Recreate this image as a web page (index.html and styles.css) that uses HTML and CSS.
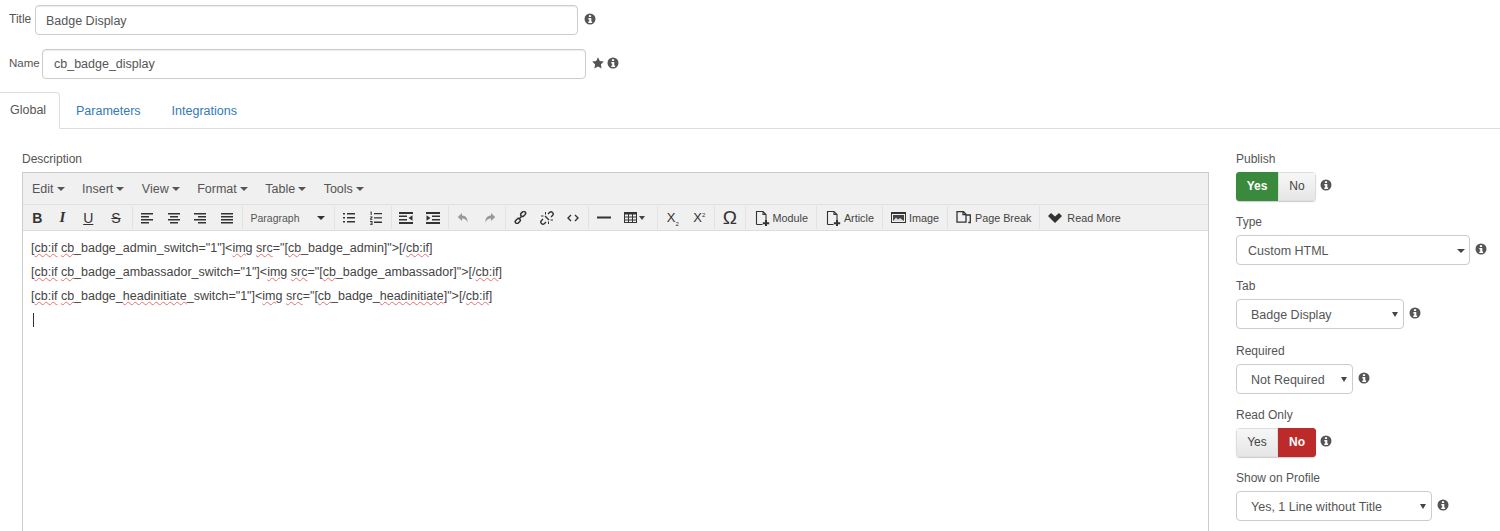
FILE: index.html
```html
<!DOCTYPE html>
<html lang="en">
<head>
<meta charset="utf-8">
<title>Badge Display</title>
<link rel="stylesheet" href="styles.css">
</head>
<body>
<svg class="defs" width="0" height="0" aria-hidden="true">
  <symbol id="info" viewBox="0 0 12 12"><path fill-rule="evenodd" d="M6 .5a5.500 5.500 0 1 0 0 11 5.500 5.500 0 0 0 0-11zM4.900 2.200h2.200v1.800H4.900zM4.300 5h3v3.600h.8V10H4.300V8.600h.9V6.400h-.9z"/></symbol>
  <symbol id="doc" viewBox="0 0 16 16"><path fill="none" stroke="#333" stroke-width="1.100" d="M2.500 14.500V1.500h6.500l3 3v6M9 1.500v3h3M2.500 14.500h6"/><path fill="#333" d="M11 10h2v2.200h2.200v2H13v2.200h-2v-2.200H8.800v-2H11z"/></symbol>
</svg>

<div class="top-row title-row">
  <label class="top-label title-label">Title</label>
  <div class="input title-input">Badge Display</div>
  <svg class="info"><use href="#info"/></svg>
</div>
<div class="top-row name-row">
  <label class="top-label name-label">Name</label>
  <div class="input name-input">cb_badge_display</div>
  <svg class="star" viewBox="0 0 12 12"><path d="M6 .3l1.800 3.700 4 .6-2.900 2.800.7 4L6 9.500l-3.600 1.900.7-4L.2 4.600l4-.6z"/></svg>
  <svg class="info"><use href="#info"/></svg>
</div>

<nav class="tabs">
  <a class="tab active">Global</a>
  <a class="tab">Parameters</a>
  <a class="tab">Integrations</a>
</nav>

<main class="main">
  <section class="left">
    <div class="field-label">Description</div>
    <div class="editor">
      <div class="menubar">
        <span class="menu">Edit<i class="caret"></i></span>
        <span class="menu">Insert<i class="caret"></i></span>
        <span class="menu">View<i class="caret"></i></span>
        <span class="menu">Format<i class="caret"></i></span>
        <span class="menu">Table<i class="caret"></i></span>
        <span class="menu">Tools<i class="caret"></i></span>
      </div>
      <div class="toolbar">
        <div class="group first">
          <span class="btn glyph bold">B</span>
          <span class="btn glyph ital">I</span>
          <span class="btn glyph under">U</span>
          <span class="btn glyph strike">S</span>
        </div>
        <div class="group">
          <span class="btn"><svg width="14" height="12" viewBox="0 0 14 12"><path d="M1 1h12v1.500H1zM1 4h8v1.500H1zM1 7h12v1.500H1zM1 10h8v1.500H1z"/></svg></span>
          <span class="btn"><svg width="14" height="12" viewBox="0 0 14 12"><path d="M1 1h12v1.500H1zM3 4h8v1.500H3zM1 7h12v1.500H1zM3 10h8v1.500H3z"/></svg></span>
          <span class="btn"><svg width="14" height="12" viewBox="0 0 14 12"><path d="M1 1h12v1.500H1zM5 4h8v1.500H5zM1 7h12v1.500H1zM5 10h8v1.500H5z"/></svg></span>
          <span class="btn"><svg width="14" height="12" viewBox="0 0 14 12"><path d="M1 1h12v1.500H1zM1 4h12v1.500H1zM1 7h12v1.500H1zM1 10h12v1.500H1z"/></svg></span>
        </div>
        <div class="group para"><span class="para-text">Paragraph</span><i class="caret"></i></div>
        <div class="group">
          <span class="btn"><svg width="14" height="12" viewBox="0 0 14 12"><path d="M1 1h2v1.500H1zM5 1h8v1.500H5zM1 5h2v1.500H1zM5 5h8v1.500H5zM1 9h2v1.500H1zM5 9h8v1.500H5z"/></svg></span>
          <span class="btn"><svg width="14" height="14" viewBox="0 0 14 14"><path d="M5 2h8v1.300H5zM5 6.300h8v1.300H5zM5 10.600h8v1.300H5zM1.500.5h1.200v3.500h-1zM1 5.500h2.500v1l-1.300 1.500h1.300v.8H1v-1l1.400-1.500H1zM1 10h2.500v4H1v-.8h1.600v-.8H1.500v-.7h1.100V11H1z"/></svg></span>
        </div>
        <div class="group">
          <span class="btn"><svg width="14" height="12" viewBox="0 0 14 12"><path d="M0 0h14v2H0zM0 3.500h8v1.500H0zM0 7h8v1.500H0zM0 10h14v2H0zM9.500 6L13.500 3.300v5.400z"/></svg></span>
          <span class="btn"><svg width="14" height="12" viewBox="0 0 14 12"><path d="M0 0h14v2H0zM6 3.500h8v1.500H6zM6 7h8v1.500H6zM0 10h14v2H0zM4.500 6L.5 3.300v5.400z"/></svg></span>
        </div>
        <div class="group">
          <span class="btn off"><svg width="12" height="12" viewBox="0 0 12 12"><path d="M5 1L.8 5 5 9V6.500c3 0 4.500 1.300 5.500 4 .3-4-1.500-7-5.500-7z"/></svg></span>
          <span class="btn off"><svg width="12" height="12" viewBox="0 0 12 12"><path d="M7 1l4.200 4L7 9V6.500c-3 0-4.500 1.300-5.500 4-.3-4 1.500-7 5.500-7z"/></svg></span>
        </div>
        <div class="group">
          <span class="btn"><svg width="13" height="13" viewBox="0 0 13 13"><g fill="none" stroke="#333" stroke-width="1.500"><rect x="6.400" y="1.200" width="5.500" height="3.600" rx="1.700" transform="rotate(-45 9 3)"/><rect x="1" y="8.200" width="5.500" height="3.600" rx="1.700" transform="rotate(-45 3.800 10)"/><path d="M4.800 8.200l3.400-3.400"/></g></svg></span>
          <span class="btn"><svg width="14" height="14" viewBox="0 0 14 14"><g fill="none" stroke="#333" stroke-width="1.400"><path d="M8 3l1.500-1.500a2 2 0 0 1 3 3L11 6M6 11l-1.500 1.500a2 2 0 0 1-3-3L3 8M5 5l4 4"/><path d="M5.500 1v2.500M1 5h2.500M8.500 13v-2.500M13 9h-2.500" stroke-width="1"/></g></svg></span>
          <span class="btn"><svg width="12" height="8" viewBox="0 0 12 8"><path fill="none" stroke="#333" stroke-width="1.400" d="M4 1L1 4l3 3M8 1l3 3-3 3"/></svg></span>
        </div>
        <div class="group">
          <span class="btn"><svg width="14" height="3" viewBox="0 0 14 3"><path d="M0 .5h14v2H0z"/></svg></span>
          <span class="btn wide"><svg width="13" height="11" viewBox="0 0 13 11"><path fill-rule="evenodd" d="M0 0h13v11H0zM1 2.500v2h3v-2zM5 2.500v2h3v-2zM9 2.500v2h3v-2zM1 5.500v2h3v-2zM5 5.500v2h3v-2zM9 5.500v2h3v-2zM1 8.500V10h3V8.500zM5 8.500V10h3V8.500zM9 8.500V10h3V8.500z"/></svg><i class="caret"></i></span>
        </div>
        <div class="group">
          <span class="btn glyph script"><span>X<sub>2</sub></span></span>
          <span class="btn glyph script"><span>X<sup>2</sup></span></span>
        </div>
        <div class="group"><span class="btn glyph omega">Ω</span></div>
        <div class="group txt"><svg class="tico" width="16" height="16"><use href="#doc"/></svg>Module</div>
        <div class="group txt"><svg class="tico" width="16" height="16"><use href="#doc"/></svg>Article</div>
        <div class="group txt"><svg class="tico" width="15" height="11" viewBox="0 0 15 11"><path fill-rule="evenodd" d="M0 0h15v11H0zM1 2v8h13V2z"/><path d="M2 3h11v6H2z" fill="#444"/><path d="M2 9l3-3.500 2 2 2-1.500 4 3z" fill="#ddd"/></svg>Image</div>
        <div class="group txt pb"><svg class="tico" width="15" height="14" viewBox="0 0 15 14"><path fill="none" stroke="#333" stroke-width="1.300" d="M1 .7h6.500l2.500 2.500v8H1zM7 .7v3h3M10 4h4.300v7.500h-2"/></svg>Page Break</div>
        <div class="group txt last"><svg class="tico" width="14" height="10" viewBox="0 0 14 10"><path d="M0 3l3-3 4 3.500L11 0l3 3-7 7z"/></svg>Read More</div>
      </div>
      <div class="content">
        <p>[<u>cb:if</u> <u>cb</u>_badge_admin_switch="1"]&lt;<u>img</u> <u>src</u>="[<u>cb</u>_badge_admin]"&gt;[/<u>cb:if</u>]</p>
        <p>[<u>cb:if</u> <u>cb</u>_badge_ambassador_switch="1"]&lt;<u>img</u> <u>src</u>="[<u>cb</u>_badge_ambassador]"&gt;[/<u>cb:if</u>]</p>
        <p>[<u>cb:if</u> <u>cb</u>_badge_<u>headinitiate</u>_switch="1"]&lt;<u>img</u> <u>src</u>="[<u>cb</u>_badge_<u>headinitiate</u>]"&gt;[/<u>cb:if</u>]</p>
        <p class="cursor-line"><span class="cursor"></span></p>
      </div>
    </div>
  </section>

  <aside class="side">
    <div class="field-label">Publish</div>
    <div class="ctl-row toggle-row">
      <div class="toggle"><span class="seg on-green">Yes</span><span class="seg">No</span></div>
      <svg class="info"><use href="#info"/></svg>
    </div>
    <div class="field-label">Type</div>
    <div class="ctl-row">
      <div class="select w-type"><span>Custom HTML</span><i class="caret"></i></div>
      <svg class="info"><use href="#info"/></svg>
    </div>
    <div class="field-label">Tab</div>
    <div class="ctl-row extra">
      <div class="select inset w-tab"><span>Badge Display</span><i class="caret small"></i></div>
      <svg class="info"><use href="#info"/></svg>
    </div>
    <div class="field-label">Required</div>
    <div class="ctl-row">
      <div class="select inset w-req"><span>Not Required</span><i class="caret small"></i></div>
      <svg class="info"><use href="#info"/></svg>
    </div>
    <div class="field-label">Read Only</div>
    <div class="ctl-row toggle-row">
      <div class="toggle"><span class="seg">Yes</span><span class="seg on-red">No</span></div>
      <svg class="info"><use href="#info"/></svg>
    </div>
    <div class="field-label">Show on Profile</div>
    <div class="ctl-row">
      <div class="select inset w-prof"><span>Yes, 1 Line without Title</span><i class="caret small"></i></div>
      <svg class="info"><use href="#info"/></svg>
    </div>
  </aside>
</main>
</body>
</html>
```
FILE: styles.css
```css
* { box-sizing: border-box; }
html, body { margin: 0; height: 531px; overflow: hidden; background: #fff; }
body { font-family: "Liberation Sans", Arial, sans-serif; font-size: 12px; color: #555; }
.defs { position: absolute; }

.info { width: 12px; height: 12px; fill: #555; flex: none; }
.caret { display: inline-block; width: 0; height: 0; border-left: 4px solid transparent; border-right: 4px solid transparent; border-top: 4px solid #444; }

.top-row { display: flex; align-items: center; padding-left: 9px; }
.title-row { height: 30px; margin-top: 5px; }
.name-row { height: 30px; margin-top: 14px; }
.top-label { margin-top: -2px; flex: none; }
.title-label { width: 26px; }
.name-label { width: 33px; font-size: 11.5px; }
.input { height: 100%; border: 1px solid #ccc; border-radius: 4px; padding: 0 10px; display: flex; align-items: center; font-size: 12.5px; box-shadow: inset 0 1px 1px rgba(0,0,0,.075); }
.title-input { width: 543px; padding-top: 1px; }
.name-input { width: 544px; padding-left: 11px; }
.title-row .info { margin-left: 6px; margin-top: -2px; }
.name-row .info { margin-left: 3px; margin-top: -2px; }
.star { width: 12px; height: 12px; margin-left: 6px; margin-top: -2px; fill: #555; flex: none; }

.tabs { display: flex; margin-top: 13px; height: 37px; border-bottom: 1px solid #ddd; font-size: 12.5px; }
.tab { padding: 0 13px 0 16px; line-height: 38px; color: #337ab7; }
.tab:nth-child(3) { padding-left: 18px; }
.tab.active { width: 60px; height: 37px; padding: 0 0 0 10px; line-height: 35px; color: #555; background: #fff; border: 1px solid #ddd; border-left: 0; border-bottom-color: #fff; border-radius: 0 4px 0 0; }

.main { display: flex; padding: 23px 0 0 22px; }
.left { width: 1187px; flex: none; }
.field-label { height: 14px; line-height: 14px; }
.left > .field-label { margin-bottom: 6px; }

.editor { border: 1px solid #ccc; height: 400px; }
.menubar { height: 31px; background: #f0f0f0; display: flex; align-items: center; padding-left: 9px; gap: 17.5px; font-size: 12.5px; }
.menu { color: #555; display: flex; align-items: center; gap: 3px; }
.menu .caret { border-top-color: #555; }
.toolbar { height: 27px; background: #f0f0f0; border-top: 1px solid #e2e2e2; border-bottom: 1px solid #ddd; display: flex; align-items: center; padding-left: 1px; }
.group { display: flex; align-items: center; height: 23px; border-right: 1px solid #e2e2e2; padding: 0 1.5px; }
.group.first { padding-left: 0; }
.group.last { border-right: 0; }
.btn { width: 26.5px; height: 22px; display: flex; align-items: center; justify-content: center; fill: #333; color: #333; flex: none; }
.btn.off { fill: #999; }
.btn.wide { gap: 1px; width: 38.5px; justify-content: flex-start; padding-left: 7px; }
.btn.wide .caret { border-left-width: 3.500px; border-right-width: 3.500px; margin-left: 1px; }
.glyph { font-size: 13px; }
.bold { font-weight: 700; font-size: 14px; }
.ital { width: 24px; font-style: italic; font-weight: 700; font-family: "Liberation Serif", serif; font-size: 15px; }
.under { width: 27.5px; text-decoration: underline; font-size: 14px; }
.strike { width: 28px; text-decoration: line-through; font-size: 14px; }
.script { font-size: 13px; }
.script sub, .script sup { font-size: 6px; line-height: 0; }
.omega { font-size: 19px; }
.para { width: 92px; padding-left: 8px; font-size: 10.500px; }
.para-text { width: 66px; }
.para .caret { border-top-color: #333; }
.txt { padding: 0 8px; font-size: 10.800px; color: #444; gap: 3px; }
.txt.pb { gap: 4px; }
.txt.last { gap: 5px; }
.tico { flex: none; fill: #333; }
.content { padding: 5px 8px; font-size: 12.5px; color: #444; }
.content p { margin: 0; height: 24px; line-height: 24px; white-space: nowrap; }
.content u { text-decoration: underline wavy #e87070 .7px; text-underline-offset: 1px; }
.cursor-line { display: flex; align-items: center; padding-left: 2px; }
.cursor { width: 1px; height: 14px; background: #333; }

.side { margin-left: 27px; width: 264px; flex: none; }
.ctl-row { display: flex; align-items: center; height: 30px; gap: 5px; margin: 6px 0 14px; }
.ctl-row.extra { margin-bottom: 15px; }
.toggle-row { height: 29px; gap: 4px; }
.ctl-row .info { margin-top: -3px; }
.toggle { display: flex; height: 29px; border-radius: 4px; overflow: hidden; box-shadow: 0 1px 1px rgba(0,0,0,.2); }
.seg { width: 38px; display: flex; align-items: center; justify-content: center; padding-bottom: 2px; background: linear-gradient(#f7f7f7, #e6e6e6); color: #444; border: 1px solid #ddd; font-size: 12px; }
.seg:first-child { width: 42px; }
.on-green { background: #3a8a3e; color: #fff; font-weight: 700; border-color: #3a8a3e; }
.on-red { background: #bd2a2a; color: #fff; font-weight: 700; border-color: #bd2a2a; }
.select { height: 30px; border: 1px solid #ccc; border-radius: 4px; display: flex; align-items: center; justify-content: space-between; padding: 1px 4px 0 11px; font-size: 12.5px; color: #555; }
.select.inset { padding-left: 14px; padding-right: 5px; }
.caret.small { border-left-width: 3px; border-right-width: 3px; border-top-width: 5px; }
.w-type { width: 234px; }
.w-tab { width: 168px; }
.w-req { width: 117px; }
.w-prof { width: 196px; }
```
